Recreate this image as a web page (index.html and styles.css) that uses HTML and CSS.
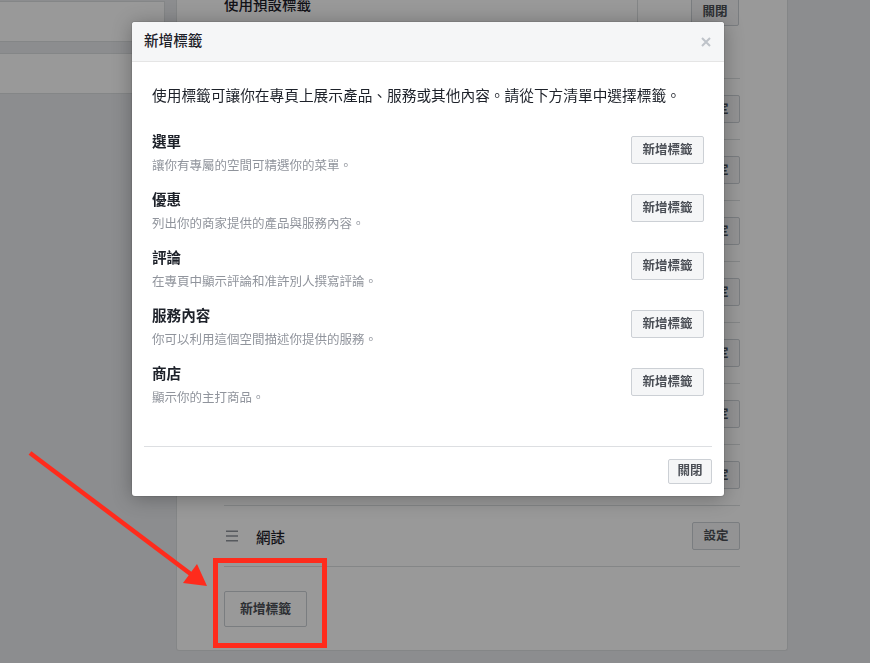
FILE: index.html
```html
<!DOCTYPE html>
<html lang="zh-Hant">
<head>
<meta charset="utf-8">
<title>新增標籤</title>
<link rel="stylesheet" href="styles.css">
</head>
<body>
<div class="page">
  <aside class="side">
    <div class="side-box"></div>
    <div class="side-box"></div>
  </aside>
  <main class="panel">
    <div class="panel-top">
      <div class="top-label">使用預設標籤</div>
      <div class="top-divider"></div>
      <button class="btn btn-set btn-top">關閉</button>
    </div>
    <div class="tab-row"><button class="btn btn-set">設定</button></div>
    <div class="tab-row"><button class="btn btn-set">設定</button></div>
    <div class="tab-row"><button class="btn btn-set">設定</button></div>
    <div class="tab-row"><button class="btn btn-set">設定</button></div>
    <div class="tab-row"><button class="btn btn-set">設定</button></div>
    <div class="tab-row"><button class="btn btn-set">設定</button></div>
    <div class="tab-row"><button class="btn btn-set">設定</button></div>
    <div class="tab-row">
      <svg class="drag" width="14" height="12" viewBox="0 0 14 12"><path d="M2 1.2H14M2 6H14M2 10.8H14" stroke="#90949c" stroke-width="1.4" fill="none"/></svg>
      <span class="tab-name">網誌</span>
      <button class="btn btn-set">設定</button>
    </div>
    <div class="panel-foot">
      <button class="btn btn-add">新增標籤</button>
    </div>
  </main>
</div>

<div class="overlay"></div>

<div class="modal">
  <div class="modal-head">
    <span class="modal-title">新增標籤</span>
    <svg class="close" width="10" height="10" viewBox="0 0 10 10"><path d="M1 1L9 9M9 1L1 9" stroke="#bec3c9" stroke-width="2" fill="none"/></svg>
  </div>
  <div class="modal-body">
    <p class="intro">使用標籤可讓你在專頁上展示產品、服務或其他內容。請從下方清單中選擇標籤。</p>
    <div class="tag-list">
      <div class="tag">
        <div class="tag-text"><div class="tag-title">選單</div><div class="tag-desc">讓你有專屬的空間可精選你的菜單。</div></div>
        <button class="btn btn-tag">新增標籤</button>
      </div>
      <div class="tag">
        <div class="tag-text"><div class="tag-title">優惠</div><div class="tag-desc">列出你的商家提供的產品與服務內容。</div></div>
        <button class="btn btn-tag">新增標籤</button>
      </div>
      <div class="tag">
        <div class="tag-text"><div class="tag-title">評論</div><div class="tag-desc">在專頁中顯示評論和准許別人撰寫評論。</div></div>
        <button class="btn btn-tag">新增標籤</button>
      </div>
      <div class="tag">
        <div class="tag-text"><div class="tag-title">服務內容</div><div class="tag-desc">你可以利用這個空間描述你提供的服務。</div></div>
        <button class="btn btn-tag">新增標籤</button>
      </div>
      <div class="tag">
        <div class="tag-text"><div class="tag-title">商店</div><div class="tag-desc">顯示你的主打商品。</div></div>
        <button class="btn btn-tag">新增標籤</button>
      </div>
    </div>
  </div>
  <div class="modal-sep"></div>
  <div class="modal-foot">
    <button class="btn btn-close">關閉</button>
  </div>
</div>

<div class="highlight"></div>
<svg class="arrow" width="870" height="663" viewBox="0 0 870 663">
  <line x1="30" y1="453" x2="192" y2="575" stroke="#ff2b1c" stroke-width="4.5"/>
  <polygon points="207,586 183,583 197,564" fill="#ff2b1c"/>
</svg>
</body>
</html>
```

FILE: styles.css
```css
* { box-sizing: border-box; }

html, body {
  margin: 0;
  height: 100%;
}

body {
  font-family: "Liberation Sans", "Noto Sans CJK TC", sans-serif;
  background: #e9ebee;
  color: #1d2129;
  overflow: hidden;
  position: relative;
}

.page {
  display: flex;
  gap: 11px;
  align-items: flex-start;
  height: 663px;
}

.side {
  width: 165px;
  flex: none;
  display: flex;
  flex-direction: column;
  gap: 11px;
  padding-top: 1px;
}

.side-box {
  height: 41px;
  background: #fff;
  border: 1px solid #dddfe2;
  border-left: none;
}

.panel {
  width: 612px;
  flex: none;
  margin-top: -20px;
  height: 671px;
  background: #fff;
  border: 1px solid #dddfe2;
  border-top: none;
  border-radius: 0 0 3px 3px;
  padding: 0 47px;
  display: flex;
  flex-direction: column;
}

.panel-top {
  height: 99px;
  flex: none;
  border-bottom: 1px solid #dddfe2;
  display: grid;
  grid-template-columns: 413px 54px 48px 1fr;
  align-items: start;
}

.top-label {
  margin-top: 16px;
  font-size: 14.5px;
  line-height: 18px;
  font-weight: 500;
  color: #1d2129;
}

.top-divider {
  height: 42px;
  border-left: 1px solid #dddfe2;
}

.btn {
  font-family: inherit;
  background: #f5f6f7;
  border: 1px solid #ccd0d5;
  border-radius: 2px;
  color: #4b4f56;
  font-weight: bold;
  font-size: 12.5px;
  line-height: 1;
  display: inline-flex;
  align-items: center;
  justify-content: center;
  margin: 0;
}

.btn-set {
  width: 48px;
  height: 28px;
  padding: 0;
  margin-left: auto;
}

.btn-top {
  margin-top: 18px;
  margin-left: 0;
}

.tab-row {
  height: 61px;
  flex: none;
  border-bottom: 1px solid #dddfe2;
  display: flex;
  align-items: center;
}

.drag {
  display: block;
  flex: none;
}

.tab-name {
  margin-left: 18px;
  font-size: 14.5px;
  font-weight: 500;
  color: #1d2129;
}

.panel-foot {
  padding-top: 24px;
}

.btn-add {
  width: 83px;
  height: 36px;
  font-size: 12.8px;
  padding: 0;
  background: #fff;
}

.overlay {
  position: fixed;
  inset: 0;
  background: rgba(0, 0, 0, 0.4);
}

.modal {
  position: absolute;
  left: 132px;
  top: 22px;
  width: 592px;
  height: 474px;
  background: #fff;
  border-radius: 3px;
  box-shadow: 0 2px 20px rgba(0, 0, 0, 0.3), 0 0 0 1px rgba(0, 0, 0, 0.08);
  display: flex;
  flex-direction: column;
}

.modal-head {
  height: 40px;
  flex: none;
  background: #f5f6f7;
  border-bottom: 1px solid #e5e5e5;
  border-radius: 3px 3px 0 0;
  padding: 0 13px 0 12px;
  display: flex;
  align-items: center;
  justify-content: space-between;
}

.modal-title {
  font-size: 14.6px;
  line-height: 19px;
  font-weight: 500;
  color: #1d2129;
}

.close {
  display: block;
}

.modal-body {
  flex: 1;
  padding: 25px 20px 0;
}

.intro {
  margin: 0 0 28px;
  font-size: 14.7px;
  line-height: 18px;
  color: #1d2129;
}

.tag-list {
  display: flex;
  flex-direction: column;
  gap: 16px;
}

.tag {
  display: flex;
  justify-content: space-between;
  align-items: flex-start;
}

.tag-title {
  font-size: 14.6px;
  line-height: 18px;
  font-weight: bold;
  color: #1d2129;
  margin-bottom: 6px;
}

.tag-desc {
  font-size: 12.5px;
  line-height: 18px;
  color: #90949c;
}

.btn-tag {
  margin-top: 3px;
  width: 73px;
  height: 28px;
  padding: 0;
}

.modal-sep {
  margin: 0 12px;
  border-top: 1px solid #dddfe2;
}

.modal-foot {
  padding: 12px;
  display: flex;
  justify-content: flex-end;
}

.btn-close {
  width: 44px;
  height: 25px;
  padding: 0;
}

.highlight {
  position: absolute;
  left: 213px;
  top: 558px;
  width: 114px;
  height: 90px;
  border: 5px solid #ff2b1c;
}

.arrow {
  position: absolute;
  left: 0;
  top: 0;
  pointer-events: none;
}
```
